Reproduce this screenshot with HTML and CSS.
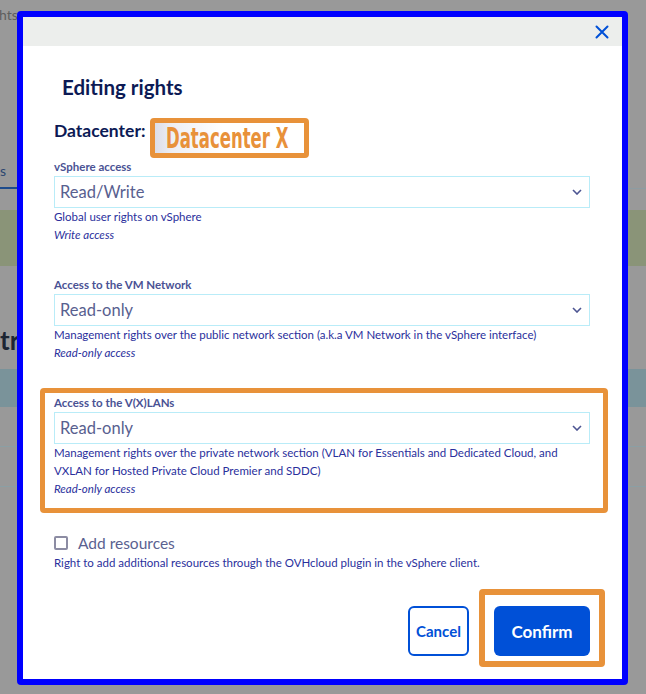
FILE: index.html
```html
<!DOCTYPE html>
<html lang="en">
<head>
<meta charset="utf-8">
<title>Editing rights</title>
<link rel="stylesheet" href="styles.css">
</head>
<body>
<div class="page">
  <div class="bg-crumb">hts</div>
  <div class="bg-tabs"><span class="bg-tab">s</span></div>
  <div class="bg-green"></div>
  <div class="bg-heading">tr</div>
  <div class="bg-blue"></div>
  <div class="bg-row"></div>
  <div class="bg-row"></div>
</div>

<div class="modal">
  <div class="modal-head">
    <button class="close" aria-label="Close">
      <svg width="14" height="14" viewBox="0 0 14 14"><path d="M1.5 1.5L12.5 12.5M12.5 1.5L1.5 12.5" stroke="#0050d7" stroke-width="2" fill="none" stroke-linecap="round"/></svg>
    </button>
  </div>
  <div class="modal-body">
    <h2 class="title">Editing rights</h2>

    <div class="dc-row">
      <span class="dc-label">Datacenter:</span>
      <span class="dc-name"><span class="dc-text">Datacenter X</span></span>
    </div>

    <div class="field first">
      <div class="label">vSphere access</div>
      <div class="select"><span>Read/Write</span>
        <svg class="chev" width="10" height="6" viewBox="0 0 10 6"><path d="M1 1l4 4 4-4" stroke="#4d5592" stroke-width="1.6" fill="none"/></svg></div>
      <div class="help">Global user rights on vSphere</div>
      <div class="help em">Write access</div>
    </div>

    <div class="field">
      <div class="label">Access to the VM Network</div>
      <div class="select"><span>Read-only</span>
        <svg class="chev" width="10" height="6" viewBox="0 0 10 6"><path d="M1 1l4 4 4-4" stroke="#4d5592" stroke-width="1.6" fill="none"/></svg></div>
      <div class="help">Management rights over the public network section (a.k.a VM Network in the vSphere interface)</div>
      <div class="help em">Read-only access</div>
    </div>

    <div class="field marked">
      <div class="label">Access to the V(X)LANs</div>
      <div class="select"><span>Read-only</span>
        <svg class="chev" width="10" height="6" viewBox="0 0 10 6"><path d="M1 1l4 4 4-4" stroke="#4d5592" stroke-width="1.6" fill="none"/></svg></div>
      <div class="help">Management rights over the private network section (VLAN for Essentials and Dedicated Cloud, and VXLAN for Hosted Private Cloud Premier and SDDC)</div>
      <div class="help em">Read-only access</div>
      <span class="mark mark-field"></span>
    </div>

    <div class="field">
      <label class="check"><span class="box"></span><span>Add resources</span></label>
      <div class="help">Right to add additional resources through the OVHcloud plugin in the vSphere client.</div>
    </div>

    <div class="actions">
      <button class="btn btn-cancel">Cancel</button>
      <span class="confirm-wrap">
        <button class="btn btn-confirm">Confirm</button>
        <span class="mark mark-btn"></span>
      </span>
    </div>
  </div>
</div>
</body>
</html>
```

FILE: styles.css
```css
* { box-sizing: border-box; }
html, body { margin: 0; padding: 0; }
body {
  background: #999999;
  font-family: Lato, "Liberation Sans", sans-serif;
  width: 646px;
  height: 694px;
  overflow: hidden;
}

/* background page (dimmed) */
.page { width: 646px; }
.bg-crumb {
  height: 30px;
  line-height: 30px;
  font-size: 14px;
  color: #5e5e5e;
  margin-left: -1px;
}
.bg-tabs {
  height: 159px;
  display: flex;
  align-items: flex-end;
  border-bottom: 1px solid #8d9ca2;
}
.bg-tab {
  display: block;
  width: 18px;
  font-size: 14px;
  line-height: 18px;
  color: #2b4670;
  padding-bottom: 7px;
  border-bottom: 2px solid #1d4b8c;
  margin-bottom: -1px;
}
.bg-green { margin-top: 21px; height: 56px; background: #8a9478; }
.bg-heading {
  margin-top: 60px;
  height: 28px;
  line-height: 28px;
  font-size: 26px;
  font-weight: bold;
  color: #1d2634;
}
.bg-blue { margin-top: 15px; height: 38px; background: #7a939a; }
.bg-row { height: 40px; border-bottom: 1px solid #8b9fa4; }

/* modal */
.modal {
  position: fixed;
  left: 17px;
  top: 11px;
  width: 611px;
  height: 674px;
  border: 6px solid #0000ff;
  border-radius: 4px;
  background: #ffffff;
  display: flex;
  flex-direction: column;
}
.modal-head {
  height: 29px;
  background: #eceeec;
  display: flex;
  justify-content: flex-end;
  align-items: center;
  padding-right: 13px;
}
.close {
  border: 0;
  background: transparent;
  padding: 0;
  width: 14px;
  height: 14px;
  display: flex;
}
.modal-body {
  padding: 0 32px 0 31px;
}
.title {
  margin: 29px 0 0 8px;
  font-size: 20.5px;
  line-height: 24px;
  font-weight: bold;
  color: #0c1a55;
}
.dc-row {
  display: flex;
  align-items: flex-start;
  gap: 5px;
  margin-top: 19px;
}
.dc-label {
  font-size: 17.5px;
  line-height: 26px;
  font-weight: bold;
  color: #0c1a55;
}
.dc-name {
  width: 159px;
  height: 40px;
  border: 5px solid #e8923a;
  border-radius: 4px;
  background: linear-gradient(90deg, #dcdee8 0%, #eeeff4 12%, #ffffff 45%);
  display: flex;
  align-items: center;
  justify-content: flex-start;
  overflow: hidden;
  padding-left: 11px;
}
.dc-text {
  display: inline-block;
  font-family: "DejaVu Sans Condensed", "Liberation Sans Narrow", sans-serif;
  font-weight: bold;
  font-size: 27px;
  line-height: 28px;
  color: #e8913a;
  transform: scale(0.68, 1.08);
  transform-origin: left center;
  white-space: nowrap;
}

.field { margin-top: 34px; position: relative; }
.field.first { margin-top: 2px; }
.label {
  font-size: 11.5px;
  line-height: 14px;
  font-weight: bold;
  color: #4a5294;
}
.select {
  margin-top: 2px;
  height: 32px;
  border: 1px solid #b9ecf8;
  display: flex;
  align-items: center;
  justify-content: space-between;
  padding: 0 5px;
  font-size: 16.5px;
  color: #58608f;
}
.chev { margin-right: 2px; }
.help {
  font-size: 11.5px;
  line-height: 18px;
  color: #2a2f9c;
}
.help.em { font-style: italic; }

.mark {
  position: absolute;
  border: 5px solid #e8923a;
  border-radius: 4px;
  pointer-events: none;
}
.mark-field { left: -14px; right: -18px; top: -8px; bottom: -15px; }

.check {
  display: flex;
  align-items: center;
  height: 22px;
  font-size: 15.5px;
  color: #5a6190;
}
.box {
  width: 14px;
  height: 14px;
  border: 2px solid #8c8ca3;
  border-radius: 2px;
  margin-right: 10px;
}

.actions {
  margin-top: 34px;
  display: flex;
  justify-content: flex-end;
  gap: 25px;
}
.btn {
  height: 50px;
  border-radius: 6px;
  font-family: Lato, "Liberation Sans", sans-serif;
  font-weight: bold;
  padding: 0;
}
.btn-cancel {
  width: 61px;
  border: 2px solid #0050d7;
  background: #ffffff;
  color: #0050d7;
  font-size: 15px;
}
.confirm-wrap { position: relative; display: flex; }
.btn-confirm {
  width: 96px;
  border: 0;
  background: #0050d7;
  color: #ffffff;
  font-size: 17px;
}
.mark-btn { left: -15px; right: -15px; top: -17px; bottom: -11px; border-width: 6px; }
```
